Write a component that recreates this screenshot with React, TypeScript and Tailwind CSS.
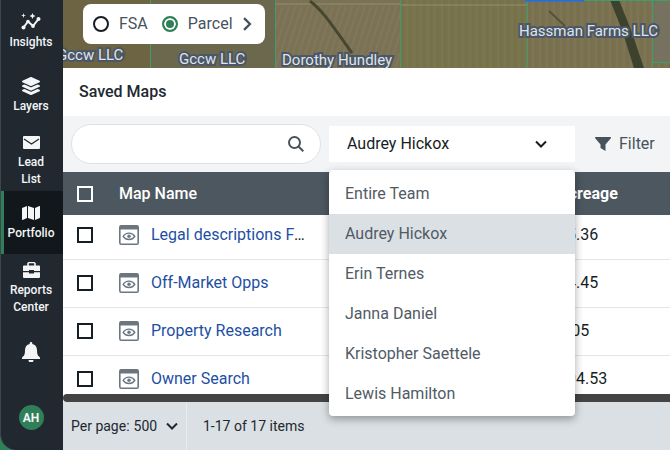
import { useState } from "react";
import type { ReactNode } from "react";
import { FaLayerGroup, FaMap } from "react-icons/fa";

type NavItem = {
  label: string;
  icon: ReactNode;
  className: string;
};

type SavedMap = {
  id: number;
  name: string;
  acreage: string;
};

const navItems: NavItem[] = [
  { label: "Insights", icon: <InsightsIcon />, className: "h-16 pt-3" },
  { label: "Layers", icon: <FaLayerGroup className="size-[18px]" />, className: "h-16 pt-3" },
  { label: "Lead List", icon: <MailIcon />, className: "h-[63px] pt-1" },
  { label: "Portfolio", icon: <FaMap className="size-[18px]" />, className: "h-[63px] pt-3" },
  { label: "Reports Center", icon: <BriefcaseIcon />, className: "h-16 pt-1.5" },
];

const savedMaps: SavedMap[] = [
  { id: 1, name: "Legal descriptions From County", acreage: "15.36" },
  { id: 2, name: "Off-Market Opps", acreage: "24.45" },
  { id: 3, name: "Property Research", acreage: "7.05" },
  { id: 4, name: "Owner Search", acreage: "194.53" },
];

const team = [
  "Entire Team",
  "Audrey Hickox",
  "Erin Ternes",
  "Janna Daniel",
  "Kristopher Saettele",
  "Lewis Hamilton",
];

function InsightsIcon() {
  return (
    <svg viewBox="0 0 20 18" className="h-[18px] w-5" fill="currentColor">
      <path d="M2.500 14.500L7 8.500l5 4.500 5.500-7" fill="none" stroke="currentColor" strokeWidth="2" />
      <circle cx="2.500" cy="14.500" r="2" />
      <circle cx="7" cy="8.500" r="1.800" />
      <circle cx="12" cy="13" r="1.900" />
      <circle cx="17.500" cy="6" r="2" />
      <path d="M2.500 0l.6 1.900L5 2.500l-1.900.6L2.500 5l-.6-1.900L0 2.500l1.900-.6z" />
      <path d="M11.500 0l.9 2.100 2.100.9-2.100.9-.9 2.100-.9-2.100L8.500 3l2.100-.9z" />
    </svg>
  );
}

function MailIcon() {
  return (
    <svg viewBox="0 0 17 13" className="h-[13px] w-[17px]">
      <rect width="17" height="13" rx="1" fill="currentColor" />
      <path d="M1 3l7.500 5L16 3" fill="none" stroke="#212830" strokeWidth="1.3" />
    </svg>
  );
}

function BriefcaseIcon() {
  return (
    <svg viewBox="0 0 17 16" className="h-4 w-[17px]" fill="currentColor">
      <path d="M5 4V1.500L6 .5h5l1 1V4" fill="none" stroke="currentColor" strokeWidth="1.6" />
      <path d="M1 3.500h15a1 1 0 0 1 1 1V9h-6V8H6v1H0V4.500a1 1 0 0 1 1-1z" />
      <path d="M0 10.200h6v1.300h5v-1.300h6V15a1 1 0 0 1-1 1H1a1 1 0 0 1-1-1z" />
    </svg>
  );
}

function BellIcon() {
  return (
    <svg viewBox="0 0 18 20" className="h-5 w-[18px]" fill="currentColor">
      <path d="M9 0a1.3 1.3 0 0 1 1.3 1.3v.8c3 .6 4.7 3 4.7 6 0 4.600 1 6 3 7.400V17H0v-1.500c2-1.400 3-2.800 3-7.400 0-3 1.700-5.400 4.700-6v-.8A1.300 1.300 0 0 1 9 0z" />
      <path d="M6.500 18h5a2.500 2.500 0 0 1-5 0z" />
    </svg>
  );
}

function PreviewIcon() {
  return (
    <svg viewBox="0 0 20 20" className="size-5 shrink-0 text-[#6c7680]" fill="none" stroke="currentColor">
      <rect x=".8" y=".8" width="18.400" height="18.400" rx="1.500" strokeWidth="1.600" />
      <path d="M1 2.500h18" strokeWidth="4" />
      <path d="M4.200 11.300c2.600-4.300 9-4.300 11.600 0-2.600 4.300-9 4.300-11.600 0z" strokeWidth="1.400" />
      <circle cx="10" cy="11.300" r="1.700" fill="currentColor" stroke="none" />
    </svg>
  );
}

function Chevron({ className }: { className: string }) {
  return (
    <svg viewBox="0 0 12 8" className={className} fill="none" stroke="currentColor">
      <path d="M1 1.500l5 5 5-5" />
    </svg>
  );
}

function Sidebar() {
  return (
    <nav className="flex w-[63px] shrink-0 flex-col items-center rounded-bl-2xl border-l border-[#3d454d] bg-[#212830] text-[#f3f5f7]">
      {navItems.map((item) => (
        <a
          key={item.label}
          href="#"
          className={`flex w-full flex-col items-center gap-0.5 pr-0.5 text-center text-xs leading-[17px] font-medium ${item.className} ${
            item.label === "Portfolio" ? "bg-[#12171c] shadow-[inset_3px_0_0_#2f7f58]" : ""
          }`}
        >
          <span className="flex h-5 items-center">{item.icon}</span>
          <span className={item.label === "Lead List" ? "w-8" : ""}>{item.label}</span>
        </a>
      ))}
      <button aria-label="Notifications" className="mt-6 mr-0.5">
        <BellIcon />
      </button>
      <button className="mt-auto mr-0.5 mb-5 size-[25px] rounded-full bg-[#2f7f58] text-xs font-bold">AH</button>
    </nav>
  );
}

function MapLabel({ className, children }: { className: string; children: ReactNode }) {
  return (
    <span
      className={`absolute text-[15px] leading-4 whitespace-nowrap text-[#dfe4ea] [-webkit-text-stroke:4px_#4b5666] [paint-order:stroke_fill] ${className}`}
    >
      {children}
    </span>
  );
}

function MapStrip() {
  return (
    <section className="relative h-[68px] shrink-0 overflow-hidden bg-[#77704e]">
      <svg className="absolute inset-0 size-full" viewBox="0 0 607 68" preserveAspectRatio="xMinYMin slice">
        <defs>
          <pattern id="furrow" width="7" height="68" patternUnits="userSpaceOnUse">
            <path d="M1 0v68" stroke="#918866" strokeWidth="1" opacity=".3" />
            <path d="M4 0v68" stroke="#625f3f" strokeWidth="1" opacity=".2" />
          </pattern>
          <pattern id="slant" width="6" height="12" patternUnits="userSpaceOnUse" patternTransform="rotate(18)">
            <path d="M1 0v12" stroke="#978d72" strokeWidth="1" opacity=".35" />
          </pattern>
        </defs>
        <path d="M0 0h87v68H0z" fill="#6d6443" />
        <path d="M87 0h125v68H87z" fill="#6c684d" />
        <path d="M212 0h125v68H212z" fill="#7b7256" />
        <path d="M337 0h127v68H337z" fill="#77734b" />
        <path d="M464 0h143v68H464z" fill="#7a7150" />
        <path d="M337 0h270v68H337z" fill="url(#furrow)" />
        <path d="M212 6h125v62H212z" fill="url(#slant)" />
        <path d="M212 4h125M337 5h127" stroke="#918a6c" strokeWidth="2" opacity=".6" />
        <path d="M247 1c12 9 20 21 42 52" fill="none" stroke="#47472f" strokeWidth="3" />
        <path d="M486 11l16 15" stroke="#565238" strokeWidth="2" />
        <path d="M547 0h9l12 30 13 38h-10l-12-38z" fill="#3c422e" />
        <path d="M590 2h17v60h-17z" fill="#77715f" />
        <path
          d="M87.500 0v68M212.500 0v68M337.500 0v68M464.500 0v68M589.500 0v68M589.500 62.500h18M464 .5h143"
          fill="none"
          stroke="#3f9d6c"
          strokeWidth="1"
        />
        <path d="M462 0h59" stroke="#1f6fe8" strokeWidth="3" />
      </svg>
      <MapLabel className="top-[47px] -left-1.5">Gccw LLC</MapLabel>
      <MapLabel className="top-[51px] left-[116px]">Gccw LLC</MapLabel>
      <MapLabel className="top-[52px] left-[219px]">Dorothy Hundley</MapLabel>
      <MapLabel className="top-[23px] left-[456px]">Hassman Farms LLC</MapLabel>
      <div className="absolute top-1 left-5 flex h-10 items-center rounded-lg bg-white px-2.5 text-base text-[#48525d]">
        <label className="flex items-center gap-2.5">
          <input
            type="radio"
            name="boundary"
            className="size-4 appearance-none rounded-full border-2 border-[#171d24] checked:border-[#2f7f58] checked:bg-[#2f7f58] checked:shadow-[inset_0_0_0_2px_white]"
          />
          FSA
        </label>
        <label className="ml-3.5 flex items-center gap-2.5">
          <input
            type="radio"
            name="boundary"
            defaultChecked
            className="size-4 appearance-none rounded-full border-2 border-[#171d24] checked:border-[#2f7f58] checked:bg-[#2f7f58] checked:shadow-[inset_0_0_0_2px_white]"
          />
          Parcel
        </label>
        <button aria-label="More boundaries" className="ml-1.5 flex w-4 justify-center">
          <Chevron className="h-2.5 w-3.5 shrink-0 -rotate-90 stroke-2" />
        </button>
      </div>
    </section>
  );
}

function Toolbar() {
  const [member, setMember] = useState("Audrey Hickox");

  return (
    <div className="flex h-14 shrink-0 items-center gap-2 bg-[#f2f4f6] pl-2">
      <label className="flex h-10 w-[250px] shrink-0 items-center rounded-full border border-[#dde2e8] bg-white px-4">
        <input type="text" aria-label="Search maps" className="min-w-0 flex-1 outline-none" />
        <svg viewBox="0 0 16 16" className="size-4 text-[#48525d]" fill="none" stroke="currentColor" strokeWidth="2">
          <circle cx="6.500" cy="6.500" r="5.500" />
          <path d="M10.500 10.500l4.800 4.800" />
        </svg>
      </label>

      <div className="relative w-[246px] shrink-0">
        <select
          aria-label="Team member"
          value={member}
          onChange={(e) => setMember(e.target.value)}
          className="block h-9 w-full appearance-none bg-white px-[18px] text-base text-[#171d24]"
        >
          {team.map((name) => (
            <option key={name}>{name}</option>
          ))}
        </select>
        <Chevron className="pointer-events-none absolute top-3.5 right-7 h-2 w-3 stroke-2 text-[#171d24]" />
        <ul
          role="listbox"
          className="absolute top-11 left-0 z-20 w-full rounded bg-white pt-1 pb-0.5 text-base text-[#505b66] shadow-[0_3px_9px_rgba(0,0,0,0.35)]"
        >
          {team.map((name) => (
            <li key={name} role="option" aria-selected={name === member}>
              <button
                onClick={() => setMember(name)}
                className={`block h-10 w-full px-4 text-left ${name === member ? "bg-[#dbe0e4]" : ""}`}
              >
                {name}
              </button>
            </li>
          ))}
        </ul>
      </div>

      <button className="ml-3 flex items-center gap-2 text-base text-[#48525d]">
        <svg viewBox="0 0 16 14" className="h-3.5 w-4" fill="currentColor">
          <path d="M.6 0h14.800c.6 0 .8.700.4 1.200L10.500 7.500V14l-5-3V7.500L.2 1.200C-.2.700 0 0 .6 0z" />
        </svg>
        Filter
      </button>
    </div>
  );
}

function MapsTable() {
  return (
    <div className="min-h-0 flex-1 overflow-hidden">
      <table className="w-full table-fixed text-base">
        <thead>
          <tr className="h-[43px] bg-[#4d5760] text-left text-white">
            <th className="w-14 pl-3.5">
              <input
                type="checkbox"
                aria-label="Select all maps"
                className="block size-4 appearance-none border-2 border-white"
              />
            </th>
            <th className="w-[439px] font-medium">Map Name</th>
            <th className="font-bold">Acreage</th>
          </tr>
        </thead>
        <tbody>
          {savedMaps.map((map) => (
            <tr key={map.id} className="h-12 border-b border-[#e1e6ea] first:h-11 [&:first-child>td]:pb-1">
              <td className="pl-3.5">
                <input
                  type="checkbox"
                  aria-label={`Select ${map.name}`}
                  className="block size-4 appearance-none border-2 border-[#171d24]"
                />
              </td>
              <td>
                <div className="flex w-[190px] items-center gap-3">
                  <PreviewIcon />
                  <div className="truncate text-[#171d24]">
                    <a href="#" className="text-[#1e4fa3]">
                      {map.name}
                    </a>
                  </div>
                </div>
              </td>
              <td className="text-[#171d24]">{map.acreage}</td>
            </tr>
          ))}
        </tbody>
      </table>
    </div>
  );
}

function Pager() {
  return (
    <footer className="flex h-12 shrink-0 items-center bg-[#dbe0e4] text-sm text-[#212830]">
      <label className="flex h-full w-[124px] items-center border-r border-[#e8ebee] pl-2">
        Per page:
        <span className="relative ml-1 flex items-center">
          <select className="w-11 appearance-none">
            <option>500</option>
          </select>
          <Chevron className="pointer-events-none absolute right-0 h-2 w-3 stroke-2" />
        </span>
      </label>
      <span className="pl-4">1-17 of 17 items</span>
    </footer>
  );
}

export default function App() {
  return (
    <div className="flex h-screen bg-[#2f7f58] font-[Roboto,sans-serif]">
      <Sidebar />
      <main className="flex min-w-0 flex-1 flex-col bg-white">
        <MapStrip />
        <h1 className="flex h-12 shrink-0 items-center px-4 text-base font-medium text-[#212830]">Saved Maps</h1>
        <Toolbar />
        <MapsTable />
        <div className="h-2 shrink-0 rounded-l-full bg-[#444]" />
        <Pager />
      </main>
    </div>
  );
}
